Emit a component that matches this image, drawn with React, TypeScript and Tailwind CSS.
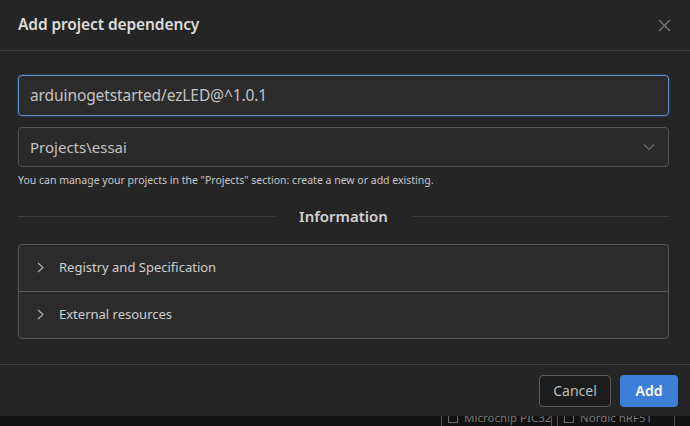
import React from "react";

export default function App() {
  return (
    <div className="w-[690px] h-[426px] bg-[#121212] overflow-hidden flex flex-col" style={{ fontFamily: '"Noto Sans", "Open Sans", sans-serif' }}>
      <div className="h-[416px] bg-[#252525] flex flex-col shrink-0">
        <div className="h-[51px] flex items-center justify-between pl-[18px] pr-[18px] border-b border-[#3b3b3b] shrink-0">
          <div className="text-[15.5px] font-semibold text-[#dcdcdc] tracking-[-0.1px]">Add project dependency</div>
          <svg width="13" height="13" viewBox="0 0 13 13" className="mr-[1px]">
            <path d="M1 1L12 12M12 1L1 12" stroke="#7a7a7a" strokeWidth="1.3" />
          </svg>
        </div>
        <div className="flex-1 pl-[18px] pr-[21px] pt-[24px] flex flex-col">
          <div className="h-[41px] rounded-[4px] border border-[#5f8fc7] bg-[#2c2c2c] flex items-center px-[11px] shadow-[0_0_0_1px_#2d3a4a]">
            <span className="text-[15.5px] text-[#c4c4c4] tracking-[-0.1px]">arduinogetstarted/ezLED@^1.0.1</span>
          </div>
          <div className="mt-[11px] h-[40px] rounded-[4px] border border-[#525252] bg-[#2a2a2a] flex items-center justify-between px-[11px]">
            <span className="text-[15px] text-[#c4c4c4]">Projects\essai</span>
            <svg width="12" height="8" viewBox="0 0 12 8" className="mr-[2px]">
              <path d="M1 1.5L6 6.5L11 1.5" stroke="#6e6e6e" strokeWidth="1.2" fill="none" />
            </svg>
          </div>
          <div className="mt-[6px] text-[10.5px] text-[#c8c8c8] leading-[14px] whitespace-nowrap">
            You can manage your projects in the "Projects" section: create a new or add existing.
          </div>
          <div className="mt-[18px] flex items-center gap-[24px]">
            <div className="flex-1 h-px bg-[#3c3c3c]" />
            <span className="text-[15px] font-semibold text-[#d2d2d2]">Information</span>
            <div className="flex-1 h-px bg-[#3c3c3c]" />
          </div>
          <div className="mt-[16px] rounded-[4px] border border-[#575757] bg-[#2b2b2b] flex flex-col">
            <div className="h-[47px] flex items-center pl-[18px] gap-[15px] border-b border-[#575757]">
              <svg width="7" height="11" viewBox="0 0 7 11">
                <path d="M1 1L6 5.5L1 10" stroke="#b5b5b5" strokeWidth="1.1" fill="none" />
              </svg>
              <span className="text-[13px] text-[#d0d0d0]">Registry and Specification</span>
            </div>
            <div className="h-[46px] flex items-center pl-[18px] gap-[15px]">
              <svg width="7" height="11" viewBox="0 0 7 11">
                <path d="M1 1L6 5.5L1 10" stroke="#b5b5b5" strokeWidth="1.1" fill="none" />
              </svg>
              <span className="text-[13px] text-[#d0d0d0]">External resources</span>
            </div>
          </div>
        </div>
        <div className="h-[52px] border-t border-[#3d3d3d] flex items-center justify-end gap-[9px] pr-[12px] shrink-0">
          <button className="h-[32px] w-[72px] rounded-[4px] border border-[#5a5a5a] bg-[#1c1c1c] text-[14px] text-[#bdbdbd]">Cancel</button>
          <button className="h-[32px] w-[58px] rounded-[4px] bg-[#3d7fd6] text-[14px] font-semibold text-white">Add</button>
        </div>
      </div>
      <div className="flex-1 relative overflow-hidden">
        <div className="absolute left-[441px] top-[-6px] flex items-start text-[11.5px] text-[#7a7a7a] leading-[16px] whitespace-nowrap">
          <div className="w-[111px] h-[20px] border-l border-r border-[#555] pl-[6px] flex items-start gap-[6px]">
            <span className="inline-block w-[10px] h-[9px] border border-[#6a6a6a] mt-[4px] shrink-0" />
            <span>Microchip PIC32</span>
          </div>
          <div className="ml-[5px] w-[118px] h-[20px] border-l border-r border-[#555] pl-[6px] flex items-start gap-[6px]">
            <span className="inline-block w-[10px] h-[9px] border border-[#6a6a6a] mt-[4px] shrink-0" />
            <span>Nordic nRF51</span>
          </div>
        </div>
      </div>
    </div>
  );
}
